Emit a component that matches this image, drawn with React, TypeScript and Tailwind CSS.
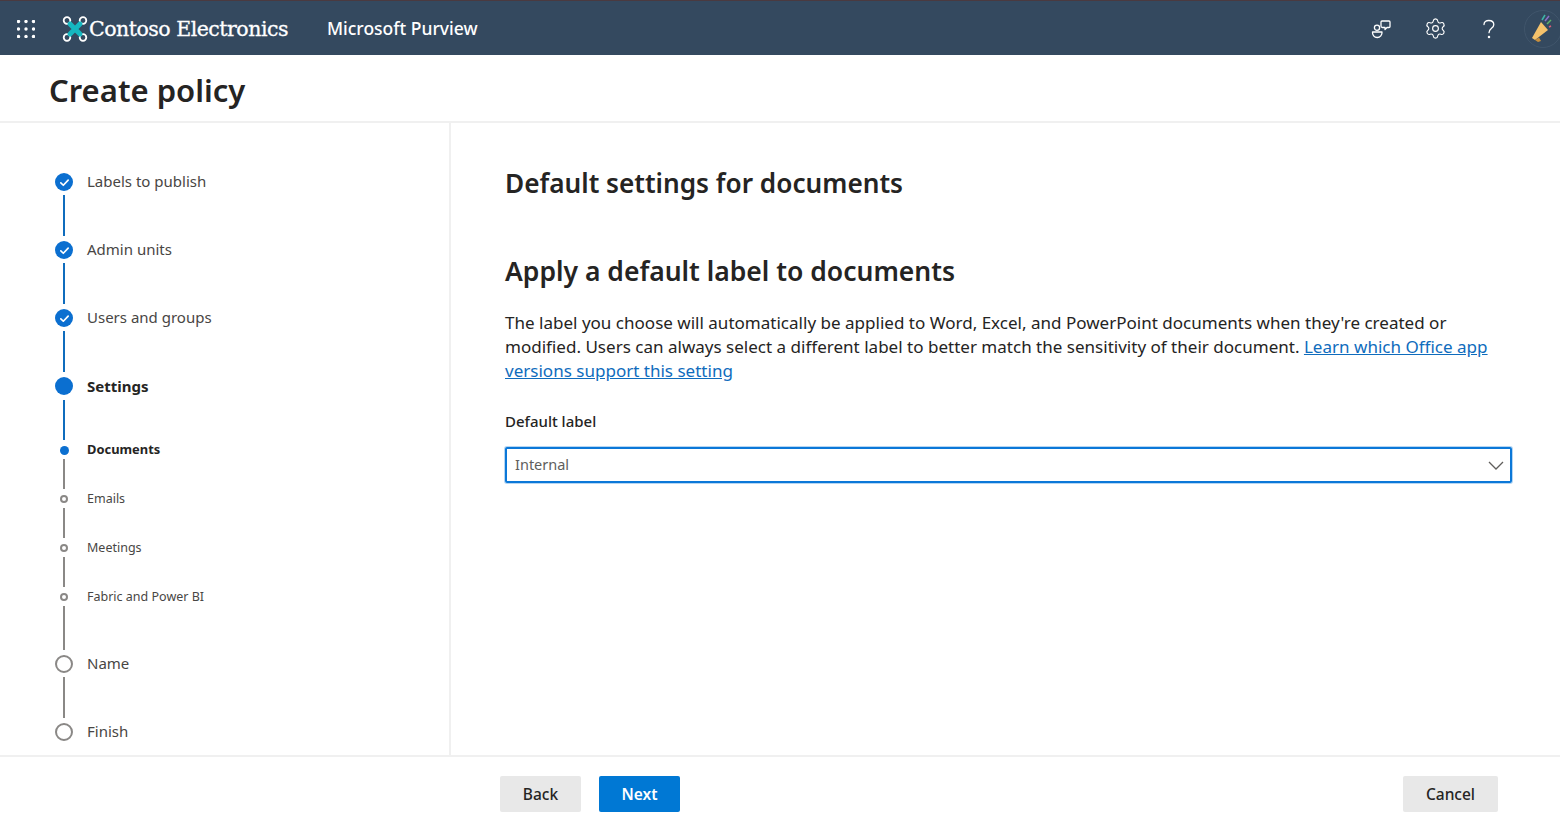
import { Settings } from "lucide-react";

type Step = {
  label: string;
  kind: "done" | "current" | "subCurrent" | "sub" | "todo";
  height: string;
  line?: string;
};

const steps: Step[] = [
  { label: "Labels to publish", kind: "done", height: "h-[68px]", line: "mt-[4px] mb-[5px] bg-[#0f6cbd]" },
  { label: "Admin units", kind: "done", height: "h-[68px]", line: "mt-[4px] mb-[5px] bg-[#0f6cbd]" },
  { label: "Users and groups", kind: "done", height: "h-[68px]", line: "mt-[4px] mb-[5px] bg-[#0f6cbd]" },
  { label: "Settings", kind: "current", height: "h-[64px]", line: "mt-[5px] mb-[1px] bg-[#0f6cbd]" },
  { label: "Documents", kind: "subCurrent", height: "h-[49px]", line: "mb-[1px] bg-[#8a8886]" },
  { label: "Emails", kind: "sub", height: "h-[49px]", line: "mb-[1px] bg-[#8a8886]" },
  { label: "Meetings", kind: "sub", height: "h-[49px]", line: "mb-[1px] bg-[#8a8886]" },
  { label: "Fabric and Power BI", kind: "sub", height: "h-[67px]", line: "mb-[5px] bg-[#8a8886]" },
  { label: "Name", kind: "todo", height: "h-[68px]", line: "mt-[4px] mb-[5px] bg-[#8a8886]" },
  { label: "Finish", kind: "todo", height: "h-[18px]" },
];

function Marker({ kind }: { kind: Step["kind"] }) {
  if (kind === "done") {
    return (
      <span className="flex h-[18px] w-[18px] items-center justify-center rounded-full bg-[#0b6fd0]">
        <svg viewBox="0 0 12 12" className="h-[11px] w-[11px]" fill="none" stroke="white" strokeWidth="1.8" strokeLinecap="round" strokeLinejoin="round">
          <path d="M2 6.4 4.7 9 10 3.4" />
        </svg>
      </span>
    );
  }
  if (kind === "current") return <span className="h-[18px] w-[18px] rounded-full bg-[#0b6fd0]" />;
  if (kind === "subCurrent") return <span className="h-[9px] w-[9px] rounded-full bg-[#0b6fd0]" />;
  if (kind === "sub") return <span className="h-[8px] w-[8px] rounded-full border-2 border-[#8a8886] bg-white" />;
  return <span className="h-[18px] w-[18px] rounded-full border-2 border-[#8a8886] bg-white" />;
}

function labelClass(kind: Step["kind"]) {
  if (kind === "current") return "text-[15px] font-bold text-[#252423]";
  if (kind === "subCurrent") return "text-[12.9px] font-bold text-[#252423]";
  if (kind === "sub") return "text-[12.5px] text-[#484644]";
  return "mb-[2px] text-[15px] text-[#484644]";
}

function Logo() {
  return (
    <svg viewBox="0 0 26 28" className="h-[28px] w-[26px]" fill="none">
      <g stroke="white" strokeWidth="1.800">
        <circle cx="5" cy="5.500" r="3.300" />
        <circle cx="21" cy="5.500" r="3.300" />
        <circle cx="5" cy="22.500" r="3.300" />
        <circle cx="21" cy="22.500" r="3.300" />
      </g>
      <path d="M8 9 18 19M18 9 8 19" stroke="#15b8c0" strokeWidth="5" strokeLinecap="round" />
    </svg>
  );
}

function Waffle() {
  return (
    <svg viewBox="0 0 18 18" className="h-[18px] w-[18px]" fill="white">
      {[1.5, 9, 16.5].map((y) =>
        [1.5, 9, 16.5].map((x) => <circle key={`${x}-${y}`} cx={x} cy={y} r="1.7" />)
      )}
    </svg>
  );
}

function FeedbackIcon() {
  return (
    <svg viewBox="0 0 20 20" className="h-[20px] w-[20px]" fill="none" stroke="white" strokeWidth="1.300" strokeLinejoin="round">
      <circle cx="6" cy="8.800" r="2.600" />
      <path d="M1.500 13h9.500c.3 3-1.800 5.500-4.800 5.500S1.200 16 1.500 13Z" />
      <path d="M11 2h7a1 1 0 0 1 1 1v4.500a1 1 0 0 1-1 1h-2l-2 2V8.500h-2.500a1.500 1.500 0 0 1-1.500-1.500V3a1 1 0 0 1 1-1z" />
    </svg>
  );
}

function HelpIcon() {
  return (
    <svg viewBox="0 0 14 20" className="h-[20px] w-[14px]" fill="none" stroke="white" strokeWidth="1.300" strokeLinecap="round">
      <path d="M2 5.500C2 3 4 1.500 6.800 1.500c3 0 5 1.800 5 4.200 0 3.800-4.800 3.600-4.800 8" />
      <circle cx="7" cy="18" r=".6" fill="white" />
    </svg>
  );
}

function Megaphone() {
  return (
    <svg viewBox="0 0 36 40" className="h-[40px] w-[36px]" fill="none">
      <circle cx="19" cy="20" r="18.500" stroke="#40556b" strokeWidth="1" />
      <path d="M8 29 17 13l7 8-13 10z" fill="#f5c26b" />
      <path d="M11 31 14 33l3-1-2-3.500z" fill="#c98f3c" />
      <path d="M18 11 21 6" stroke="#3fb6a8" strokeWidth="1.500" />
      <path d="M21 12 25 7" stroke="#8b6fc9" strokeWidth="1.500" />
      <path d="M23 15 27 11" stroke="#5fb36a" strokeWidth="1.500" />
      <path d="M25 18 27 17" stroke="#e05b7a" strokeWidth="1.500" />
    </svg>
  );
}

export default function App() {
  return (
    <div className="flex h-screen flex-col overflow-hidden bg-white font-['Noto_Sans','Open_Sans',sans-serif] text-[#252423]">
      <header className="flex h-[55px] shrink-0 items-center border-t border-[#4a3a40] bg-[#34495f] pt-[1px] text-white">
        <div className="ml-[17px] flex items-center">
          <Waffle />
        </div>
        <div className="ml-[27px] flex items-center">
          <Logo />
          <span className="ml-[1px] pt-[2px] font-['DejaVu_Serif',serif] text-[20.500px] tracking-[-0.500px] [-webkit-text-stroke:0.3px_white]">Contoso Electronics</span>
        </div>
        <span className="ml-[39px] text-[17.500px] font-medium">Microsoft Purview</span>
        <div className="ml-auto flex items-center">
          <span className="flex w-[54px] justify-center"><FeedbackIcon /></span>
          <span className="flex w-[54px] justify-center"><Settings size={23} strokeWidth={1.200} /></span>
          <span className="flex w-[54px] justify-center"><HelpIcon /></span>
          <span className="ml-[8px] w-[36px]"><Megaphone /></span>
        </div>
      </header>

      <div className="flex h-[68px] shrink-0 items-center border-b-2 border-[#f0f0f0] pl-[49px] pt-[4px]">
        <h1 className="text-[31px] font-semibold">Create policy</h1>
      </div>

      <main className="flex min-h-0 flex-1">
        <nav className="w-[451px] shrink-0 border-r-2 border-[#f0f0f0] pl-[54px] pt-[50px]">
          {steps.map((step) => (
            <div key={step.label} className={`flex gap-[13px] ${step.height}`}>
              <div className="flex w-[20px] flex-col items-center">
                <div className="flex h-[18px] items-center">
                  <Marker kind={step.kind} />
                </div>
                {step.line && <div className={`w-[2px] flex-1 ${step.line}`} />}
              </div>
              <div className="flex h-[18px] items-center whitespace-nowrap">
                <span className={labelClass(step.kind)}>{step.label}</span>
              </div>
            </div>
          ))}
        </nav>

        <section className="flex-1 pl-[54px] pr-[48px] pt-[41px]">
          <h2 className="text-[26.200px] font-semibold leading-[38px]">Default settings for documents</h2>
          <h3 className="mt-[50px] text-[26.500px] font-semibold leading-[38px]">Apply a default label to documents</h3>
          <p className="mt-[21px] text-[17.050px] leading-[24px] text-[#252423]">
            The label you choose will automatically be applied to Word, Excel, and PowerPoint documents when they're created or modified. Users can always select a different label to better match the sensitivity of their document.{" "}
            <a className="text-[#0f6cbd] underline" href="#">Learn which Office app versions support this setting</a>
          </p>
          <label className="mt-[26px] block text-[15px] font-medium leading-[24px]">Default label</label>
          <div className="mt-[14px] flex h-[36px] items-center justify-between rounded-[2px] border-2 border-[#0b78d8] pl-[8px] pr-[6px] ring-1 ring-[#0b78d8]/30">
            <span className="text-[14.500px] text-[#605e5c]">Internal</span>
            <svg viewBox="0 0 16 9" className="h-[9px] w-[16px]" fill="none" stroke="#605e5c" strokeWidth="1.300">
              <path d="M1 1l7 7 7-7" />
            </svg>
          </div>
        </section>
      </main>

      <footer className="flex h-[69px] shrink-0 items-start border-t-2 border-[#f0f0f0] pl-[500px] pr-[62px] pt-[19px]">
        <button className="h-[36px] w-[81px] rounded-[2px] bg-[#e8e8e8] text-[15.500px] font-medium leading-[37px]">Back</button>
        <button className="ml-[18px] h-[36px] w-[81px] rounded-[2px] bg-[#0078d4] text-[15.500px] font-semibold leading-[37px] text-white">Next</button>
        <button className="ml-auto h-[36px] w-[95px] rounded-[2px] bg-[#e8e8e8] text-[15.500px] font-medium leading-[37px]">Cancel</button>
      </footer>
    </div>
  );
}
